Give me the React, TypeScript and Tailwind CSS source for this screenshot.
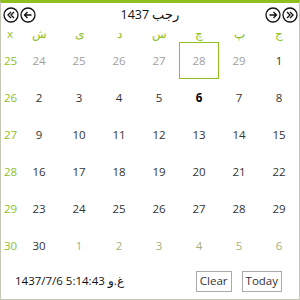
import React from "react";

const DoubleLeft = () => (
  <svg width="16" height="16" viewBox="0 0 16 16" fill="none" stroke="#111" strokeWidth="1.3">
    <circle cx="8" cy="8" r="7" />
    <path d="M8 5 L5 8 L8 11 M11 5 L8 8 L11 11" />
  </svg>
);
const Left = () => (
  <svg width="16" height="16" viewBox="0 0 16 16" fill="none" stroke="#111" strokeWidth="1.3">
    <circle cx="8" cy="8" r="7" />
    <path d="M11.5 8 H4.5 M7.5 5 L4.5 8 L7.5 11" />
  </svg>
);
const Right = () => (
  <svg width="16" height="16" viewBox="0 0 16 16" fill="none" stroke="#111" strokeWidth="1.3">
    <circle cx="8" cy="8" r="7" />
    <path d="M4.5 8 H11.5 M8.5 5 L11.5 8 L8.5 11" />
  </svg>
);
const DoubleRight = () => (
  <svg width="16" height="16" viewBox="0 0 16 16" fill="none" stroke="#111" strokeWidth="1.3">
    <circle cx="8" cy="8" r="7" />
    <path d="M5 5 L8 8 L5 11 M8 5 L11 8 L8 11" />
  </svg>
);

type Kind = "other" | "cur" | "today" | "sel" | "next";
type Cell = { n: number; kind: Kind };

const rows: { wk: number; cells: Cell[] }[] = [
  {
    wk: 25,
    cells: [
      ...[24, 25, 26, 27, 28, 29].map((n) => ({ n, kind: (n === 28 ? "sel" : "other") as Kind })),
      { n: 1, kind: "cur" as Kind },
    ],
  },
  { wk: 26, cells: [2, 3, 4, 5, 6, 7, 8].map((n) => ({ n, kind: (n === 6 ? "today" : "cur") as Kind })) },
  { wk: 27, cells: [9, 10, 11, 12, 13, 14, 15].map((n) => ({ n, kind: "cur" as Kind })) },
  { wk: 28, cells: [16, 17, 18, 19, 20, 21, 22].map((n) => ({ n, kind: "cur" as Kind })) },
  { wk: 29, cells: [23, 24, 25, 26, 27, 28, 29].map((n) => ({ n, kind: "cur" as Kind })) },
  {
    wk: 30,
    cells: [{ n: 30, kind: "cur" as Kind }, ...[1, 2, 3, 4, 5, 6].map((n) => ({ n, kind: "next" as Kind }))],
  },
];

const dayNames = ["ش", "ی", "د", "س", "چ", "پ", "ج"];

export default function App() {
  return (
    <div
      className="w-[300px] h-[300px] bg-white border-t-[3px] border-t-[#8fc01e] border-l border-r border-b border-l-[#c4c6b6] border-r-[#c4c6b6] border-b-[#c4c6b6] flex flex-col text-[11.5px] text-[#333]"
      style={{ fontFamily: '"Open Sans", "Noto Sans", sans-serif' }}
    >
      <div className="flex items-center h-[20px] mt-[2px] px-[1px]">
        <div className="flex gap-[1px] w-[40px] pl-[1px]">
          <DoubleLeft />
          <Left />
        </div>
        <div className="flex-1 text-center text-[#111] text-[12.5px] leading-none">
          <span dir="ltr">1437 رجب</span>
        </div>
        <div className="flex gap-[1px] w-[40px] justify-end">
          <Right />
          <DoubleRight />
        </div>
      </div>
      <div className="flex h-[16px] mt-[1px] items-center text-[#8fc01e]">
        <div className="w-[18px] text-center">x</div>
        {dayNames.map((d) => (
          <div key={d} className="w-[40px] text-center" style={{ fontFamily: '"Noto Sans", sans-serif' }}>
            {d}
          </div>
        ))}
      </div>
      <div className="flex flex-col">
        {rows.map((r) => (
          <div key={r.wk} className="flex h-[37px] items-center">
            <div className="w-[18px] text-center text-[#8fc01e] pl-[1px]">{r.wk}</div>
            {r.cells.map((c, i) => {
              let cls = "w-[40px] h-[37px] flex items-center justify-center";
              if (c.kind === "other") cls += " text-[#a0a0a0]";
              else if (c.kind === "next") cls += " text-[#aab07c]";
              else if (c.kind === "sel") cls += " text-[#a0a0a0] border border-[#8fc01e]";
              else if (c.kind === "today") cls += " text-black font-bold";
              else cls += " text-[#333]";
              return (
                <div key={i} className={cls}>
                  {c.n}
                </div>
              );
            })}
          </div>
        ))}
      </div>
      <div className="flex items-center mt-[6px] h-[22px]">
        <div className="pl-[14px] text-[#111]" dir="ltr">
          1437/7/6 5:14:43 غ.و
        </div>
        <div className="flex-1" />
        <button className="h-[21px] px-[3px] border border-[#aaa] text-[#333] leading-none">Clear</button>
        <button className="h-[21px] px-[3px] ml-[10px] mr-[17px] border border-[#aaa] text-[#333] leading-none">Today</button>
      </div>
    </div>
  );
}
